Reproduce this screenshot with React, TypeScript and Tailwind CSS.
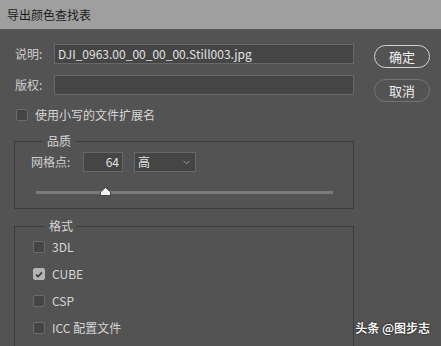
import React, { useState } from "react";

const font = { fontFamily: '"Noto Sans CJK SC", "Noto Sans", sans-serif' };

function Check({ checked, label, onToggle }: { checked: boolean; label: string; onToggle: () => void }) {
  return (
    <button onClick={onToggle} className="flex items-center h-[12px] text-[12px] text-[#d6d6d6]">
      <span
        className={`w-[12px] h-[12px] rounded-[2px] border flex items-center justify-center ${
          checked ? "bg-[#b4b4b4] border-[#b4b4b4]" : "bg-[#454545] border-[#6b6b6b]"
        }`}
      >
        {checked && (
          <svg width="8" height="7" viewBox="0 0 8 7">
            <path d="M1 3.6 L3 5.6 L7 1.4" fill="none" stroke="#3a3a3a" strokeWidth="1.6" />
          </svg>
        )}
      </span>
      <span className="ml-[7px] leading-none">{label}</span>
    </button>
  );
}

export default function App() {
  const [lower, setLower] = useState(false);
  const [formats, setFormats] = useState<Record<string, boolean>>({
    "3DL": false,
    CUBE: true,
    CSP: false,
    "ICC 配置文件": false,
  });

  const toggle = (k: string) => setFormats((p) => ({ ...p, [k]: !p[k] }));

  return (
    <div className="relative w-[441px] h-[346px] bg-[#535353] overflow-hidden" style={font}>
      {/* title bar */}
      <div className="h-[29px] bg-[#9f9f9f] flex items-center pl-[7px] text-[12px] text-[#1c1c1c]">
        导出颜色查找表
      </div>

      <div className="flex pl-[14px] pt-[15px]">
        {/* left column */}
        <div className="w-[340px]">
          <div className="flex items-center h-[20px]">
            <span className="w-[40px] pl-[1px] text-[12px] text-[#cfcfcf]">说明:</span>
            <div className="flex-1 h-[20px] bg-[#454545] border border-[#686868] flex items-center px-[3px] text-[12px] text-[#e2e2e2]">
              DJI_0963.00_00_00_00.Still003.jpg
            </div>
          </div>
          <div className="flex items-center h-[20px] mt-[11px]">
            <span className="w-[40px] pl-[1px] text-[12px] text-[#cfcfcf]">版权:</span>
            <div className="flex-1 h-[20px] bg-[#454545] border border-[#686868]" />
          </div>

          <div className="mt-[14px] pl-[2px]">
            <Check checked={lower} label="使用小写的文件扩展名" onToggle={() => setLower(!lower)} />
          </div>

          {/* quality group */}
          <fieldset className="mt-[12px] border border-[#3d3d3d] pl-[16px] pr-[20px] pb-[12px]">
            <legend className="ml-[12px] px-[4px] text-[12px] leading-[16px] text-[#d6d6d6]">品质</legend>
            <div className="flex items-center mt-[3px] h-[20px]">
              <span className="w-[52px] text-[12px] text-[#cfcfcf]">网格点:</span>
              <div className="w-[40px] h-[20px] bg-[#454545] border border-[#686868] flex items-center justify-end pr-[3px] text-[12px] text-[#e2e2e2]">
                64
              </div>
              <div className="ml-[11px] w-[62px] h-[20px] bg-[#454545] border border-[#686868] flex items-center justify-between pl-[3px] pr-[5px] text-[12px] text-[#e2e2e2]">
                <span>高</span>
                <svg width="7" height="5" viewBox="0 0 7 5">
                  <path d="M0.5 0.8 L3.5 3.8 L6.5 0.8" fill="none" stroke="#9a9a9a" strokeWidth="1" />
                </svg>
              </div>
            </div>
            <div className="relative mt-[16px] ml-[5px] h-[8px] flex items-center">
              <div className="w-full h-[3px] bg-[#7a7a7a]" />
              <svg className="absolute left-[64px] top-[-1px]" width="11" height="9" viewBox="0 0 11 9">
                <path d="M5.5 0.5 L10.5 5 L10.5 8.5 L0.5 8.5 L0.5 5 Z" fill="#f2f2f2" stroke="#2e2e2e" strokeWidth="0.8" />
              </svg>
            </div>
          </fieldset>

          {/* format group */}
          <fieldset className="mt-[9px] border border-[#3d3d3d] pl-[18px] pb-[20px]">
            <legend className="ml-[12px] px-[4px] text-[12px] leading-[16px] text-[#d6d6d6]">格式</legend>
            <div className="flex flex-col gap-[15px] mt-[7px]">
              {Object.keys(formats).map((k) => (
                <Check key={k} checked={formats[k]} label={k} onToggle={() => toggle(k)} />
              ))}
            </div>
          </fieldset>
        </div>

        {/* buttons */}
        <div className="ml-[20px] flex flex-col pt-[1px]">
          <button className="w-[56px] h-[23px] rounded-full border-[1.5px] border-[#d4d4d4] text-[13px] text-[#f0f0f0] flex items-center justify-center">
            确定
          </button>
          <button className="mt-[11px] w-[56px] h-[23px] rounded-full border-[1.5px] border-[#747474] text-[13px] text-[#ececec] flex items-center justify-center">
            取消
          </button>
        </div>
      </div>

      {/* watermark */}
      <div className="absolute right-[11px] bottom-[9px] text-[12px] font-bold text-[#f4f4f4] [text-shadow:0_0_2px_#000]">
        头条 @图步志
      </div>
    </div>
  );
}
